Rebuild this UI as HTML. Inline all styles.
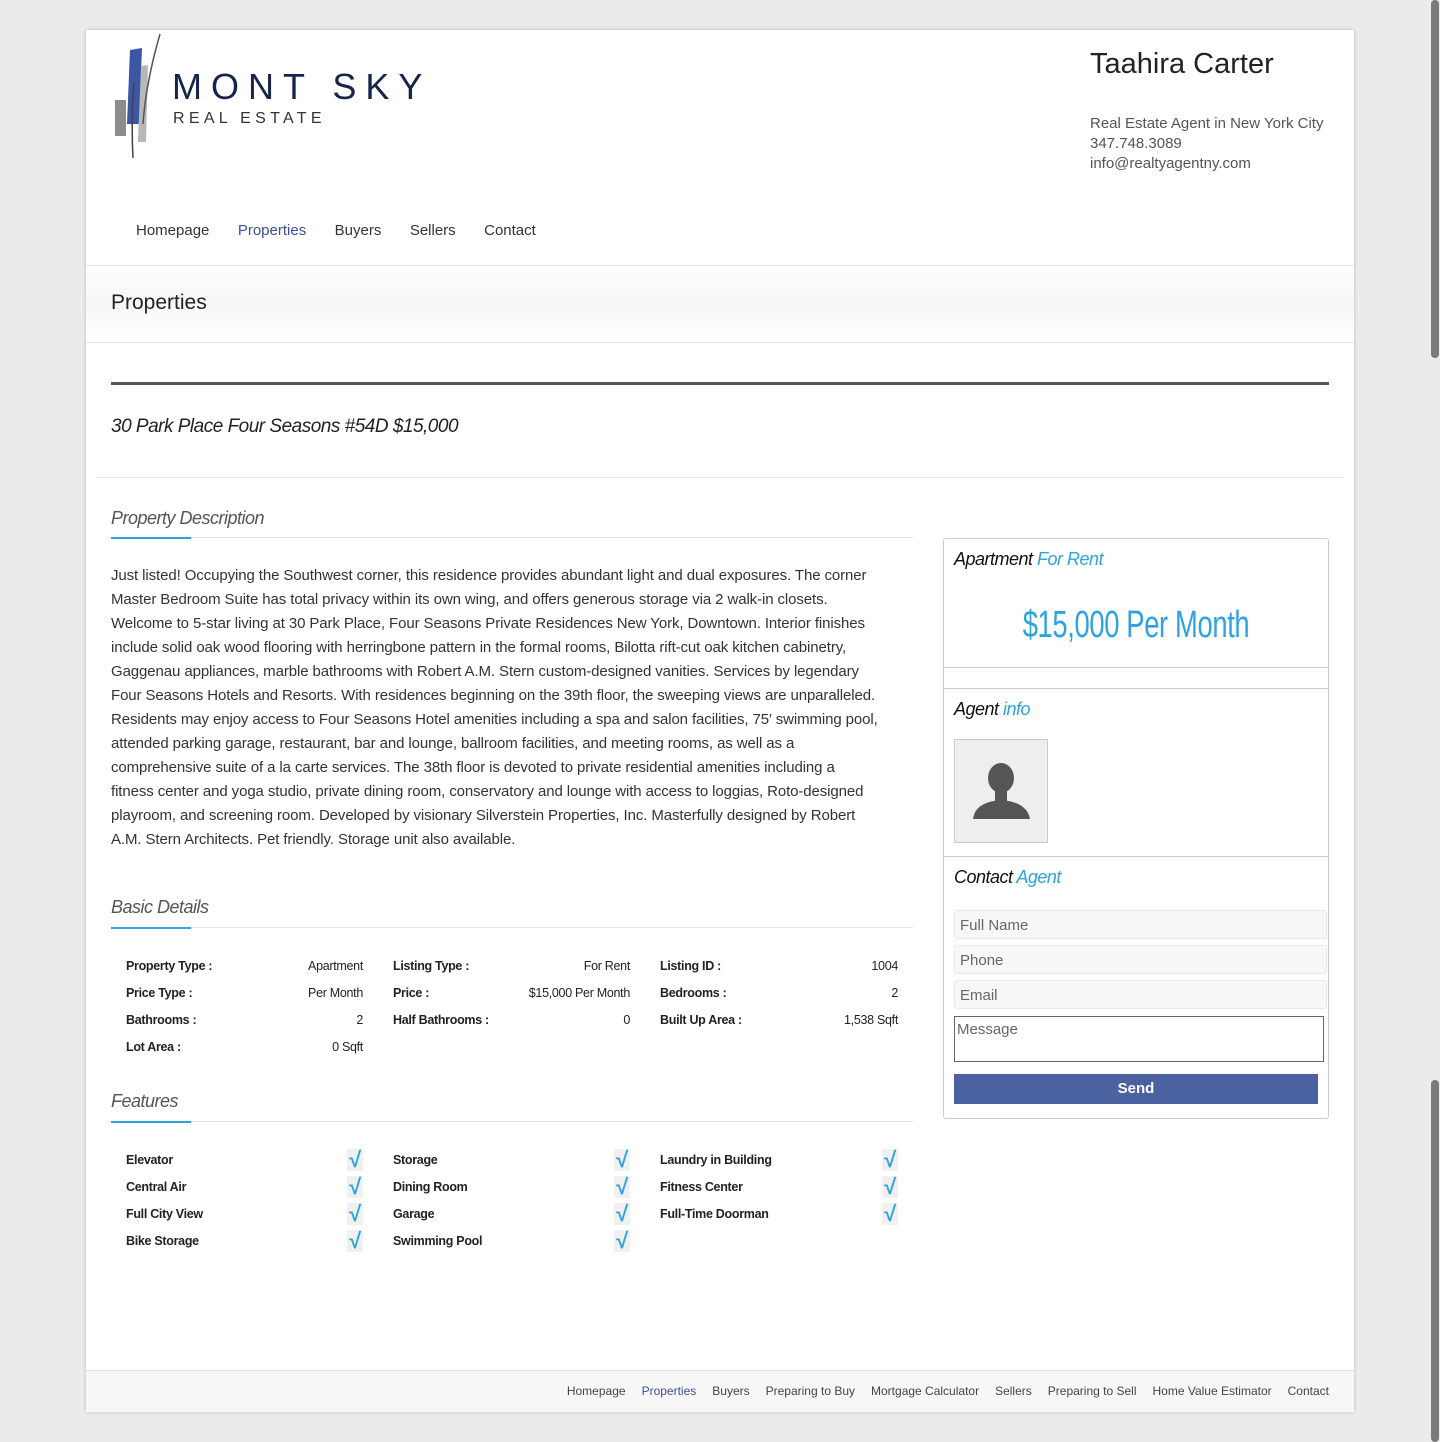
<!DOCTYPE html>
<html><head><meta charset="utf-8"><style>
*{margin:0;padding:0;box-sizing:border-box}
body{width:1440px;height:1442px;background:#ebebeb;font-family:"Liberation Sans",sans-serif;color:#333;position:relative;overflow:hidden}
.wrap{position:absolute;left:86px;top:30px;width:1268px;height:1382px;background:#fff;box-shadow:0 0 4px rgba(0,0,0,.2)}
.a{position:absolute;white-space:nowrap}
.nav span{margin-right:24px;font-size:15px;color:#333}
.h3{font-style:italic;font-size:18px;color:#555;letter-spacing:-.5px}
.desc{font-size:15px;line-height:24px;color:#333;letter-spacing:-.1px}
.tbl td{font-size:12.5px;height:27px;color:#222;letter-spacing:-.3px}
.tbl td.l{font-weight:bold}
.tbl td.r{text-align:right}
.chk{color:#2ea3e0;font-size:22px;font-weight:bold;background:#f0f0f0;width:16px;display:inline-block;text-align:center;line-height:22px}
.box{position:absolute;left:857px;width:386px;border:1px solid #ccc}
.bt{font-style:italic;font-size:18px;color:#111;letter-spacing:-.5px}
.bt b{font-weight:normal;color:#2ea3e0}
.in{position:absolute;left:10px;width:373px;height:29px;background:#f7f7f7;border:1px solid #e8e8e8;border-radius:3px;font-size:15px;color:#666;padding:6px 5px}
.foot span{margin-left:16px;font-size:12px;color:#444}
</style></head><body>
<div class="wrap">
<svg class="a" style="left:26px;top:2px" width="50" height="130" viewBox="0 0 50 130">
<rect x="3" y="68" width="11" height="36" fill="#8c8c8c"/>
<polygon points="18,18 30,16 27,92 15,92" fill="#3a56a4"/>
<polygon points="29,34 36,33 34,110 26,110" fill="#b8b8b8"/>
<path d="M48 2 Q34 50 31 92" stroke="#555" stroke-width="1.5" fill="none"/>
<path d="M22 50 Q19 90 21 126" stroke="#444" stroke-width="1.5" fill="none"/>
</svg>
<div class="a" style="left:86px;top:36px;font-size:36px;letter-spacing:9px;color:#17254a">MONT SKY</div>
<div class="a" style="left:87px;top:80px;font-size:16px;letter-spacing:4.3px;color:#333">REAL ESTATE</div>
<div class="a" style="left:1004px;top:18px;font-size:29px;color:#222">Taahira Carter</div>
<div class="a" style="left:1004px;top:84px;font-size:15px;line-height:20px;color:#555">Real Estate Agent in New York City<br>347.748.3089<br>info@realtyagentny.com</div>
<div class="a nav" style="left:50px;top:192px"><span>Homepage</span> <span style="color:#3c4f9a">Properties</span> <span>Buyers</span> <span>Sellers</span> <span>Contact</span></div>
<div class="a" style="left:0;top:235px;width:1268px;height:78px;border-top:1px solid #e5e5e5;border-bottom:1px solid #e5e5e5;background:linear-gradient(#fff,#f7f7f7 50%,#fff)"></div>
<div class="a" style="left:25px;top:261px;font-size:21px;color:#222">Properties</div>
<div class="a" style="left:25px;top:352px;width:1218px;height:3px;background:#555"></div>
<div class="a" style="left:25px;top:386px;font-size:19px;font-style:italic;color:#222;letter-spacing:-.5px">30 Park Place Four Seasons #54D $15,000</div>
<div class="a" style="left:10px;top:447px;width:1248px;height:1px;background:#e5e5e5"></div>

<div class="a h3" style="left:25px;top:478px">Property Description</div>
<div class="a" style="left:25px;top:507px;width:802px;height:1px;background:#e5e5e5"></div>
<div class="a" style="left:25px;top:507px;width:80px;height:2px;background:#2ea3e0"></div>
<div class="a desc" style="left:25px;top:534px">Just listed! Occupying the Southwest corner, this residence provides abundant light and dual exposures. The corner<br>Master Bedroom Suite has total privacy within its own wing, and offers generous storage via 2 walk-in closets.<br>Welcome to 5-star living at 30 Park Place, Four Seasons Private Residences New York, Downtown. Interior finishes<br>include solid oak wood flooring with herringbone pattern in the formal rooms, Bilotta rift-cut oak kitchen cabinetry,<br>Gaggenau appliances, marble bathrooms with Robert A.M. Stern custom-designed vanities. Services by legendary<br>Four Seasons Hotels and Resorts. With residences beginning on the 39th floor, the sweeping views are unparalleled.<br>Residents may enjoy access to Four Seasons Hotel amenities including a spa and salon facilities, 75′ swimming pool,<br>attended parking garage, restaurant, bar and lounge, ballroom facilities, and meeting rooms, as well as a<br>comprehensive suite of a la carte services. The 38th floor is devoted to private residential amenities including a<br>fitness center and yoga studio, private dining room, conservatory and lounge with access to loggias, Roto-designed<br>playroom, and screening room. Developed by visionary Silverstein Properties, Inc. Masterfully designed by Robert<br>A.M. Stern Architects. Pet friendly. Storage unit also available.</div>

<div class="a h3" style="left:25px;top:867px">Basic Details</div>
<div class="a" style="left:25px;top:897px;width:802px;height:1px;background:#e5e5e5"></div>
<div class="a" style="left:25px;top:897px;width:80px;height:2px;background:#2ea3e0"></div>
<table class="a tbl" style="left:40px;top:922px;width:772px;border-collapse:collapse">
<tr><td class="l" style="width:120px">Property Type :</td><td class="r" style="width:117px">Apartment</td><td style="width:30px"></td><td class="l" style="width:110px">Listing Type :</td><td class="r" style="width:127px">For Rent</td><td style="width:30px"></td><td class="l">Listing ID :</td><td class="r">1004</td></tr>
<tr><td class="l">Price Type :</td><td class="r">Per Month</td><td></td><td class="l">Price :</td><td class="r">$15,000 Per Month</td><td></td><td class="l">Bedrooms :</td><td class="r">2</td></tr>
<tr><td class="l">Bathrooms :</td><td class="r">2</td><td></td><td class="l">Half Bathrooms :</td><td class="r">0</td><td></td><td class="l">Built Up Area :</td><td class="r">1,538 Sqft</td></tr>
<tr><td class="l">Lot Area :</td><td class="r">0 Sqft</td><td></td><td></td><td></td><td></td><td></td><td></td></tr>
</table>

<div class="a h3" style="left:25px;top:1061px">Features</div>
<div class="a" style="left:25px;top:1091px;width:802px;height:1px;background:#e5e5e5"></div>
<div class="a" style="left:25px;top:1091px;width:80px;height:2px;background:#2ea3e0"></div>
<table class="a tbl" style="left:40px;top:1116px;width:772px;border-collapse:collapse">
<tr><td class="l" style="width:120px">Elevator</td><td class="r" style="width:117px"><span class="chk">√</span></td><td style="width:30px"></td><td class="l" style="width:110px">Storage</td><td class="r" style="width:127px"><span class="chk">√</span></td><td style="width:30px"></td><td class="l">Laundry in Building</td><td class="r"><span class="chk">√</span></td></tr>
<tr><td class="l">Central Air</td><td class="r"><span class="chk">√</span></td><td></td><td class="l">Dining Room</td><td class="r"><span class="chk">√</span></td><td></td><td class="l">Fitness Center</td><td class="r"><span class="chk">√</span></td></tr>
<tr><td class="l">Full City View</td><td class="r"><span class="chk">√</span></td><td></td><td class="l">Garage</td><td class="r"><span class="chk">√</span></td><td></td><td class="l">Full-Time Doorman</td><td class="r"><span class="chk">√</span></td></tr>
<tr><td class="l">Bike Storage</td><td class="r"><span class="chk">√</span></td><td></td><td class="l">Swimming Pool</td><td class="r"><span class="chk">√</span></td><td></td><td></td><td></td></tr>
</table>

<div class="box" style="top:508px;height:581px;border-radius:3px"></div>
<div class="a bt" style="left:868px;top:519px">Apartment <b>For Rent</b></div>
<div class="a" style="left:857px;top:574px;width:386px;text-align:center;font-size:38px;color:#2ea3e0;transform:scaleX(.72);letter-spacing:-.5px">$15,000 Per Month</div>
<div class="a" style="left:857px;top:637px;width:386px;height:1px;background:#ccc"></div>
<div class="a" style="left:857px;top:658px;width:386px;height:1px;background:#ccc"></div>
<div class="a bt" style="left:868px;top:669px">Agent <b>info</b></div>
<div class="a" style="left:868px;top:709px;width:94px;height:104px;background:#eee;border:1px solid #ccc">
<svg width="92" height="102" viewBox="0 0 92 102"><ellipse cx="46" cy="38" rx="13" ry="15" fill="#555"/><rect x="40" y="48" width="12" height="14" fill="#555"/><path d="M18 79 Q20 62 46 60 Q72 62 75 79 Z" fill="#555"/></svg></div>
<div class="a" style="left:857px;top:826px;width:386px;height:1px;background:#ccc"></div>
<div class="a bt" style="left:868px;top:837px">Contact <b>Agent</b></div>
<div class="in" style="left:868px;top:880px">Full Name</div>
<div class="in" style="left:868px;top:915px">Phone</div>
<div class="in" style="left:868px;top:950px">Email</div>
<div class="a" style="left:868px;top:986px;width:370px;height:46px;border:1px solid #666;font-size:15px;color:#666;padding:4px 2px">Message</div>
<div class="a" style="left:868px;top:1044px;width:364px;height:30px;background:#4a62a0;color:#fff;font-weight:bold;font-size:15px;text-align:center;line-height:30px">Send</div>

<div class="a" style="left:0;top:1340px;width:1268px;height:42px;background:#f7f7f7;border-top:1px solid #e5e5e5"></div>
<div class="a foot" style="right:25px;top:1352px"><span>Homepage</span><span style="color:#3c4f9a">Properties</span><span>Buyers</span><span>Preparing to Buy</span><span>Mortgage Calculator</span><span>Sellers</span><span>Preparing to Sell</span><span>Home Value Estimator</span><span>Contact</span></div>
</div>
<div class="a" style="left:1431px;top:0;width:8px;height:358px;background:#7a7a7a;border-radius:4px"></div>
<div class="a" style="left:1431px;top:1080px;width:8px;height:362px;background:#7a7a7a;border-radius:4px"></div>
</body></html>
